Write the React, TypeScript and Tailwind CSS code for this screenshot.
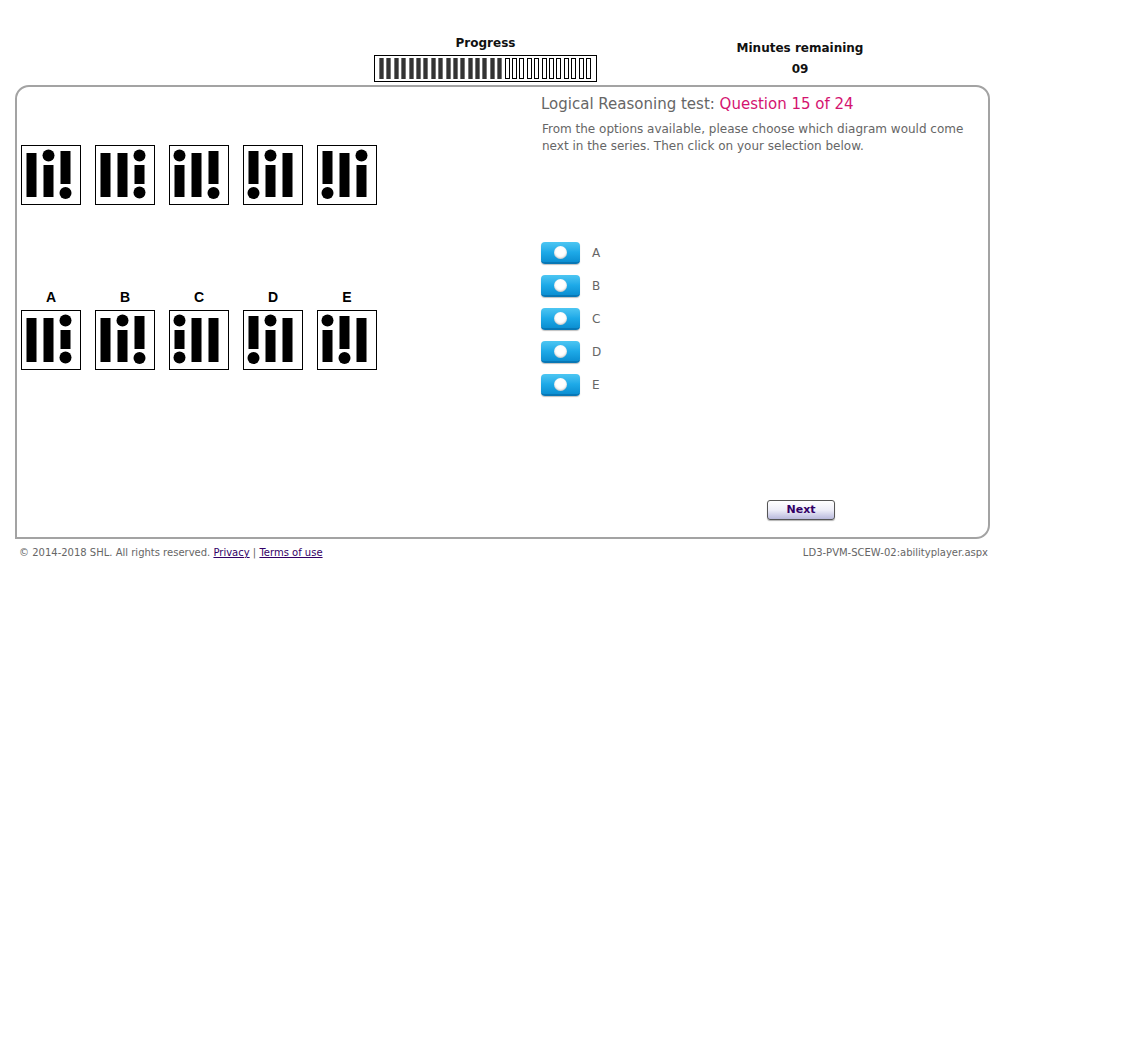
import React from "react";

type Shape = "I" | "i" | "!" | ":";

const COLS = [9.5, 26.5, 43.5];

function ShapeCol({ shape, cx }: { shape: Shape; cx: number }) {
  const x = cx - 5;
  if (shape === "I") return <rect x={x} y={7} width={10} height={44} fill="#000" />;
  if (shape === "i")
    return (
      <g>
        <circle cx={cx} cy={9.5} r={6} fill="#000" />
        <rect x={x} y={19} width={10} height={32} fill="#000" />
      </g>
    );
  if (shape === "!")
    return (
      <g>
        <rect x={x} y={5} width={10} height={33} fill="#000" />
        <circle cx={cx} cy={47} r={6} fill="#000" />
      </g>
    );
  return (
    <g>
      <circle cx={cx} cy={9.5} r={6} fill="#000" />
      <rect x={x} y={19} width={10} height={19} fill="#000" />
      <circle cx={cx} cy={46.5} r={6} fill="#000" />
    </g>
  );
}

function Figure({ shapes }: { shapes: Shape[] }) {
  return (
    <div className="w-[60px] h-[60px] border border-black bg-white">
      <svg width="58" height="58" viewBox="0 0 58 58">
        {shapes.map((s, i) => (
          <ShapeCol key={i} shape={s} cx={COLS[i]} />
        ))}
      </svg>
    </div>
  );
}

const series: Shape[][] = [
  ["I", "i", "!"],
  ["I", "I", ":"],
  ["i", "I", "!"],
  ["!", "i", "I"],
  ["!", "I", "i"],
];

const answers: { label: string; shapes: Shape[] }[] = [
  { label: "A", shapes: ["I", "I", ":"] },
  { label: "B", shapes: ["I", "i", "!"] },
  { label: "C", shapes: [":", "I", "I"] },
  { label: "D", shapes: ["!", "i", "I"] },
  { label: "E", shapes: ["i", "!", "I"] },
];

function RadioButton({ label }: { label: string }) {
  return (
    <div className="flex items-center h-[22px]">
      <div className="w-[39px] h-[22px] rounded-[4px] bg-gradient-to-b from-[#4cc6f2] via-[#1eaae8] to-[#0b8fd2] border-b-[2px] border-[#0877b5] flex items-center justify-center shadow-[0_1px_1px_rgba(0,0,0,0.25)]">
        <div className="w-[13px] h-[13px] rounded-full bg-white shadow-[inset_0_-1px_2px_rgba(0,0,0,0.25)] mt-[1px]" />
      </div>
      <span className="ml-[12px] text-[12px] text-[#666]">{label}</span>
    </div>
  );
}

export default function App() {
  const filled = 17;
  const total = 29;
  return (
    <div
      className="bg-white w-[1130px] h-[1062px] pl-[15px]"
      style={{ fontFamily: '"DejaVu Sans", Verdana, sans-serif' }}
    >
      {/* Header */}
      <div className="flex w-[975px] h-[85px]">
        <div className="w-[359px]" />
        <div className="w-[223px] flex flex-col items-center pt-[35px]">
          <div className="text-[12px] font-bold text-[#111] leading-[16px]">Progress</div>
          <div className="mt-[4px] w-[223px] h-[27px] border border-black pl-[4px] pt-[2px]">
            <div className="flex justify-between w-[212px] h-[21px]">
              {Array.from({ length: total }).map((_, i) =>
                i < filled ? (
                  <div
                    key={i}
                    className="w-[5px] h-[21px] bg-[#333] border-x border-[#777]"
                  />
                ) : (
                  <div key={i} className="w-[5px] h-[21px] border border-black bg-white" />
                )
              )}
            </div>
          </div>
        </div>
        <div className="w-[133px]" />
        <div className="w-[140px] flex flex-col items-center pt-[40px]">
          <div className="text-[12px] font-bold text-[#111] leading-[16px]">Minutes remaining</div>
          <div className="text-[12px] font-bold text-[#111] leading-[16px] mt-[5px]">09</div>
        </div>
      </div>

      {/* Main panel */}
      <div className="w-[975px] h-[454px] border-2 border-[#a3a3a3] rounded-tl-[14px] rounded-tr-[14px] rounded-br-[14px] flex">
        <div className="w-[522px] pl-[4px] pt-[58px]">
          <div className="flex gap-[14px]">
            {series.map((s, i) => (
              <Figure key={i} shapes={s} />
            ))}
          </div>
          <div className="flex gap-[14px] mt-[84px]">
            {answers.map((a) => (
              <div key={a.label} className="flex flex-col items-center">
                <div
                  className="text-[14px] font-bold leading-[16px] text-black"
                  style={{ fontFamily: '"Liberation Sans", Arial, sans-serif' }}
                >
                  {a.label}
                </div>
                <div className="mt-[5px]">
                  <Figure shapes={a.shapes} />
                </div>
              </div>
            ))}
          </div>
        </div>
        <div className="flex-1 pl-[2px] pt-[8px] pr-[10px] flex flex-col">
          <div className="text-[15px] leading-[18px] text-[#666]">
            Logical Reasoning test: <span className="text-[#d4136f]">Question 15 of 24</span>
          </div>
          <div className="mt-[8px] pl-[1px] text-[12px] leading-[17px] text-[#666] w-[430px]">
            From the options available, please choose which diagram would come next in the series. Then click on your selection below.
          </div>
          <div className="mt-[87px] flex flex-col gap-[11px]">
            {["A", "B", "C", "D", "E"].map((l) => (
              <RadioButton key={l} label={l} />
            ))}
          </div>
          <div className="mt-[100px] pl-[226px]">
            <button className="w-[68px] h-[20px] rounded-[3px] border border-[#555] bg-gradient-to-b from-white via-[#eeeef8] to-[#b9b9dc] text-[11px] font-bold text-[#330066] leading-[18px] shadow-[0_1px_1px_rgba(0,0,0,0.3)]">
              Next
            </button>
          </div>
        </div>
      </div>

      {/* Footer */}
      <div className="w-[975px] flex justify-between items-center pt-[7px] pl-[4px] pr-[2px] text-[10px] text-[#666] leading-[13px]">
        <div>
          © 2014-2018 SHL. All rights reserved.{" "}
          <a className="underline text-[#330066]">Privacy</a> |{" "}
          <a className="underline text-[#330066]">Terms of use</a>
        </div>
        <div>LD3-PVM-SCEW-02:abilityplayer.aspx</div>
      </div>
    </div>
  );
}
